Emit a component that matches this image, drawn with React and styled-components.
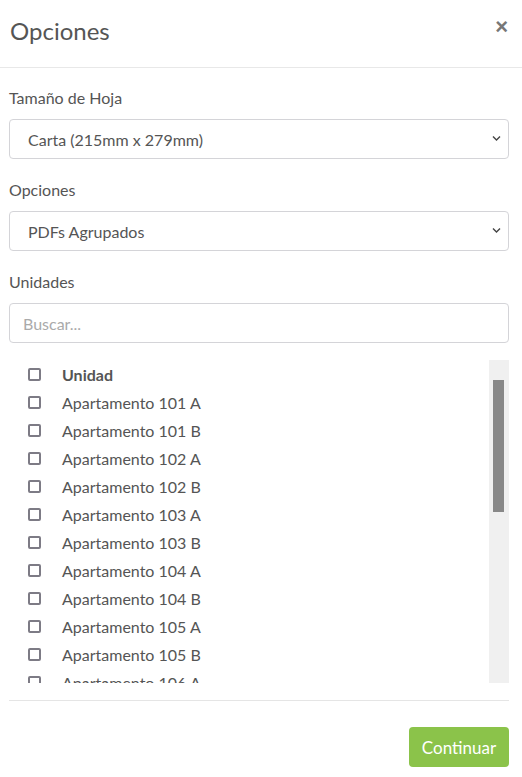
import React from 'react';
import styled, { createGlobalStyle } from 'styled-components';

const GlobalStyle = createGlobalStyle`
  html, body {
    margin: 0;
    padding: 0;
    background: #fff;
  }
  body {
    font-family: 'Lato', 'Noto Sans', sans-serif;
    color: #555;
  }
  * {
    box-sizing: border-box;
  }
`;

const Modal = styled.div`
  width: 522px;
  height: 777px;
  display: flex;
  flex-direction: column;
  background: #fff;
`;

const Header = styled.div`
  height: 68px;
  padding: 18px 14px 0 10px;
  display: flex;
  justify-content: space-between;
  align-items: flex-start;
  border-bottom: 1px solid #e8e8e8;
`;

const Title = styled.h4`
  margin: 0;
  font-size: 24px;
  line-height: 26px;
  font-weight: 400;
  color: #555;
`;

const Close = styled.button`
  border: 0;
  background: none;
  padding: 0;
  margin-top: -2px;
  font-family: 'Liberation Sans', sans-serif;
  font-size: 22px;
  line-height: 22px;
  font-weight: 700;
  color: #777;
  cursor: pointer;
`;

const Body = styled.div`
  padding: 20px 13px 0 9px;
  display: flex;
  flex-direction: column;
`;

const Group = styled.div`
  margin-bottom: ${(p) => p.$gap || 21}px;
`;

const Label = styled.label`
  display: block;
  font-size: 16px;
  line-height: 20px;
  margin-bottom: 11px;
  color: #555;
`;

const SelectWrap = styled.div`
  position: relative;
`;

const Select = styled.select`
  width: 100%;
  height: 40px;
  padding: 0 30px 0 18px;
  border: 1px solid #d4d4d8;
  border-radius: 4px;
  background: #fff;
  font-family: inherit;
  font-size: 16px;
  color: #555;
  appearance: none;
  -webkit-appearance: none;
  outline: none;
`;

const Chevron = styled.svg`
  position: absolute;
  right: 8px;
  top: 16px;
  width: 9px;
  height: 7px;
  pointer-events: none;
`;

const Search = styled.input`
  width: 100%;
  height: 40px;
  padding: 0 13px;
  border: 1px solid #d4d4d8;
  border-radius: 4px;
  font-family: inherit;
  font-size: 16px;
  color: #555;
  outline: none;
  &::placeholder {
    color: #aaa;
  }
`;

const ListBox = styled.div`
  height: 323px;
  display: flex;
  margin-bottom: 17px;
`;

const ListRows = styled.div`
  flex: 1;
  overflow: hidden;
`;

const Row = styled.label`
  height: 28px;
  display: flex;
  align-items: center;
  padding-left: 19px;
  font-size: 16px;
  font-weight: ${(p) => (p.$head ? 700 : 400)};
  color: #555;
`;

const Box = styled.span`
  width: 13px;
  height: 13px;
  border: 2px solid #7d7b85;
  border-radius: 2px;
  margin-right: 21px;
  flex-shrink: 0;
`;

const Track = styled.div`
  width: 20px;
  background: #f0f0f0;
  padding: 20px 5px 0 4px;
`;

const Thumb = styled.div`
  height: 132px;
  background: #888;
`;

const Footer = styled.div`
  margin: 0 13px 0 9px;
  border-top: 1px solid #e5e5e5;
  padding-top: 26px;
  display: flex;
  justify-content: flex-end;
`;

const Button = styled.button`
  width: 100px;
  height: 40px;
  border: 0;
  border-radius: 4px;
  background: #8bc34a;
  color: #fff;
  font-family: inherit;
  font-size: 17px;
  cursor: pointer;
`;

const units = [];
for (let n = 101; n <= 111; n++) {
  units.push(`Apartamento ${n} A`, `Apartamento ${n} B`);
}

const ChevronIcon = () => (
  <Chevron viewBox="0 0 9 7">
    <path d="M1 1.5 L4.5 5 L8 1.5" fill="none" stroke="#444" strokeWidth="1.4" />
  </Chevron>
);

const App = () => (
  <Modal>
    <GlobalStyle />
    <Header>
      <Title>Opciones</Title>
      <Close aria-label="Cerrar">×</Close>
    </Header>
    <Body>
      <Group>
        <Label>Tamaño de Hoja</Label>
        <SelectWrap>
          <Select defaultValue="carta">
            <option value="carta">Carta (215mm x 279mm)</option>
            <option value="oficio">Oficio (216mm x 340mm)</option>
          </Select>
          <ChevronIcon />
        </SelectWrap>
      </Group>
      <Group>
        <Label>Opciones</Label>
        <SelectWrap>
          <Select defaultValue="agrupados">
            <option value="agrupados">PDFs Agrupados</option>
            <option value="individuales">PDFs Individuales</option>
          </Select>
          <ChevronIcon />
        </SelectWrap>
      </Group>
      <Group $gap={17}>
        <Label>Unidades</Label>
        <Search placeholder="Buscar..." />
      </Group>
      <ListBox>
        <ListRows>
          <Row $head>
            <Box />
            Unidad
          </Row>
          {units.map((u) => (
            <Row key={u}>
              <Box />
              {u}
            </Row>
          ))}
        </ListRows>
        <Track>
          <Thumb />
        </Track>
      </ListBox>
    </Body>
    <Footer>
      <Button>Continuar</Button>
    </Footer>
  </Modal>
);

export default App;
